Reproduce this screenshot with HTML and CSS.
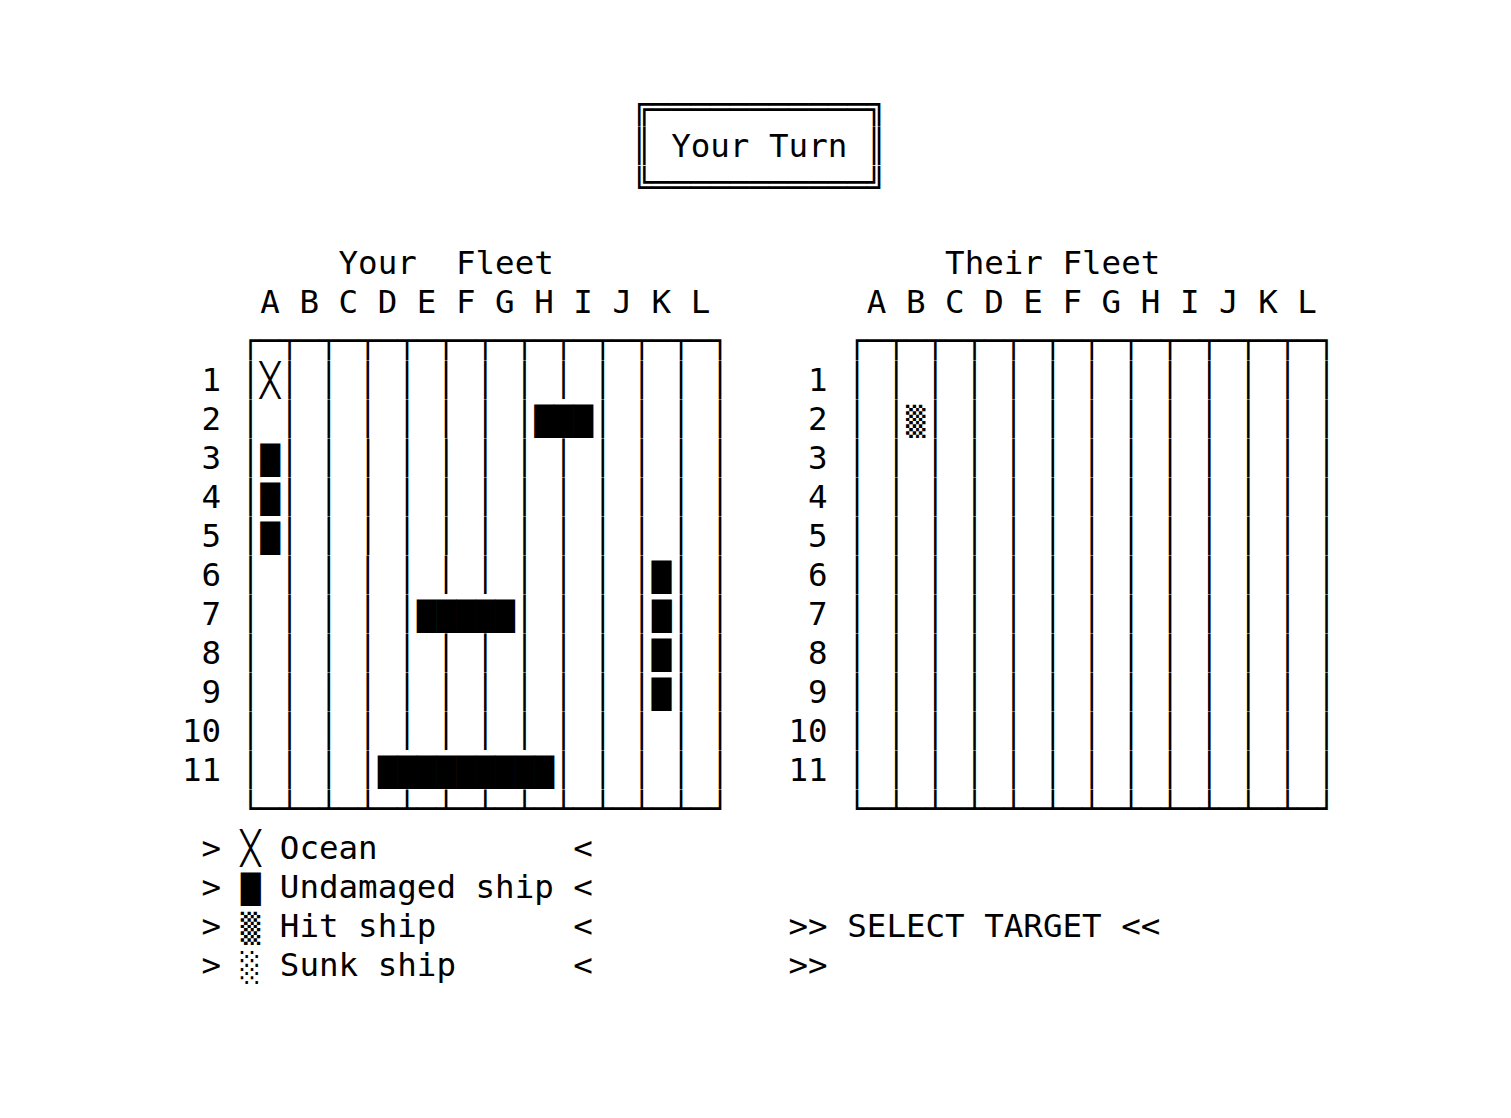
FILE: index.html
```html
<!DOCTYPE html>
<html>
<head lang="en">
    <meta charset="UTF-8">
    <title>Battleship</title>
    <link rel="stylesheet" href="styles.css">
</head>
<body>
    <div id="screen">
        <pre id="banner">╔═══════════╗
║ Your Turn ║
╚═══════════╝</pre>

        <div class="row">
<pre class="board">        Your  Fleet
    A B C D E F G H I J K L
   ┌─┬─┬─┬─┬─┬─┬─┬─┬─┬─┬─┬─┐
 1 │╳│ │ │ │ │ │ │ │ │ │ │ │
 2 │ │ │ │ │ │ │ │<span class="cell">███</span>│ │ │ │
 3 │<span class="cell">█</span>│ │ │ │ │ │ │ │ │ │ │ │
 4 │<span class="cell">█</span>│ │ │ │ │ │ │ │ │ │ │ │
 5 │<span class="cell">█</span>│ │ │ │ │ │ │ │ │ │ │ │
 6 │ │ │ │ │ │ │ │ │ │ │<span class="cell">█</span>│ │
 7 │ │ │ │ │<span class="cell">█████</span>│ │ │ │<span class="cell">█</span>│ │
 8 │ │ │ │ │ │ │ │ │ │ │<span class="cell">█</span>│ │
 9 │ │ │ │ │ │ │ │ │ │ │<span class="cell">█</span>│ │
10 │ │ │ │ │ │ │ │ │ │ │ │ │
11 │ │ │ │<span class="cell">█████████</span>│ │ │ │ │
   └─┴─┴─┴─┴─┴─┴─┴─┴─┴─┴─┴─┘</pre>
<pre class="board">        Their Fleet
    A B C D E F G H I J K L
   ┌─┬─┬─┬─┬─┬─┬─┬─┬─┬─┬─┬─┐
 1 │ │ │ │ │ │ │ │ │ │ │ │ │
 2 │ │<span class="cell">▒</span>│ │ │ │ │ │ │ │ │ │ │
 3 │ │ │ │ │ │ │ │ │ │ │ │ │
 4 │ │ │ │ │ │ │ │ │ │ │ │ │
 5 │ │ │ │ │ │ │ │ │ │ │ │ │
 6 │ │ │ │ │ │ │ │ │ │ │ │ │
 7 │ │ │ │ │ │ │ │ │ │ │ │ │
 8 │ │ │ │ │ │ │ │ │ │ │ │ │
 9 │ │ │ │ │ │ │ │ │ │ │ │ │
10 │ │ │ │ │ │ │ │ │ │ │ │ │
11 │ │ │ │ │ │ │ │ │ │ │ │ │
   └─┴─┴─┴─┴─┴─┴─┴─┴─┴─┴─┴─┘</pre>
        </div>

        <div class="row">
<pre id="legend"> > ╳ Ocean          &lt;
 > <span class="cell">█</span> Undamaged ship &lt;
 > <span class="cell">▒</span> Hit ship       &lt;
 > <span class="cell">░</span> Sunk ship      &lt;</pre>
<pre id="status">


&gt;&gt; SELECT TARGET &lt;&lt;
&gt;&gt;</pre>
        </div>
    </div>
</body>
</html>
```

FILE: styles.css
```css
* {
    margin: 0;
    padding: 0;
}
body {
    background: #fff;
    color: #000;
}
#screen {
    font-family: "DejaVu Sans Mono", monospace;
    font-size: 32.5px;
    line-height: 39px;
    padding: 88px 0 0 182px;
}
pre {
    font: inherit;
}
#banner {
    margin-left: 23ch;
    margin-bottom: 39px;
}
.row {
    display: grid;
    grid-template-columns: 28ch 28ch;
    column-gap: 3ch;
}
/* filled cells are drawn a bit shorter than the row, like the terminal does */
.cell {
    display: inline-block;
    vertical-align: top;
    transform: translateY(2px) scaleY(0.87);
}
```
